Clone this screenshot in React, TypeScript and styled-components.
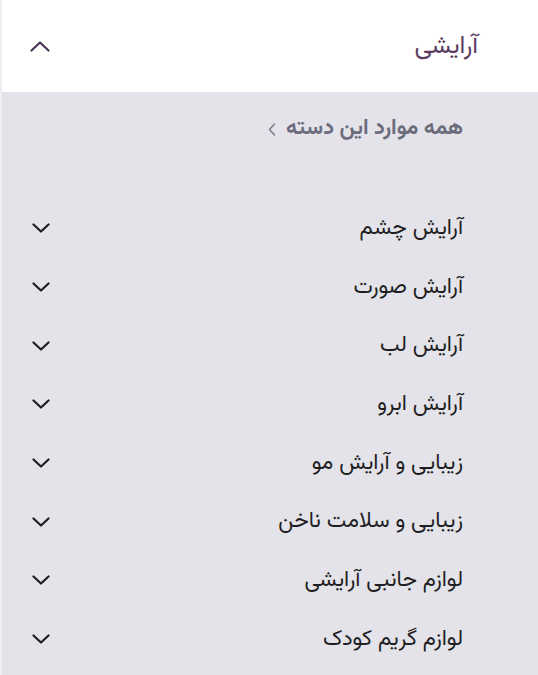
import React from "react";
import styled, { createGlobalStyle } from "styled-components";

const Global = createGlobalStyle`
  html, body { margin: 0; padding: 0; background: #e3e3e9; }
  body { font-family: "Vazirmatn", "Noto Sans Arabic", "DejaVu Sans", sans-serif; }
`;

const Panel = styled.div`
  width: 538px;
  min-height: 675px;
  box-sizing: border-box;
  border-left: 2px solid #efeff3;
  background: #e3e3e9;
  direction: rtl;
`;

const Header = styled.div`
  height: 92px;
  background: #ffffff;
  display: flex;
  align-items: center;
  justify-content: space-between;
  padding: 0 60px 0 28px;
  box-sizing: border-box;
`;

const HeaderTitle = styled.span`
  font-size: 25px;
  color: #5b3d60;
  line-height: 1;
`;

const Body = styled.div`
  padding: 8px 75px 0 30px;
  display: flex;
  flex-direction: column;
`;

const AllLink = styled.div`
  height: 58px;
  display: flex;
  align-items: center;
  gap: 10px;
  font-size: 21.7px;
  font-weight: bold;
  color: #6c6c7c;
`;

const List = styled.div`
  margin-top: 41px;
  display: flex;
  flex-direction: column;
`;

const Row = styled.div`
  height: 58.7px;
  display: flex;
  align-items: center;
  justify-content: space-between;
  font-size: 22px;
  color: #1e1e22;
`;

const Icon = styled.svg`
  display: block;
  flex: none;
`;

const ChevronDown = () => (
  <Icon width="18" height="10" viewBox="0 0 18 10">
    <polyline points="1.5,1.5 9,8.5 16.5,1.5" fill="none" stroke="#1e1e22" strokeWidth="2.2" strokeLinecap="round" strokeLinejoin="round" />
  </Icon>
);

const ChevronUp = () => (
  <Icon width="20" height="11" viewBox="0 0 20 11">
    <polyline points="1.5,9.5 10,1.5 18.5,9.5" fill="none" stroke="#4a3350" strokeWidth="2.2" strokeLinecap="round" strokeLinejoin="round" />
  </Icon>
);

const ChevronLeft = () => (
  <Icon width="8" height="13" viewBox="0 0 8 13">
    <polyline points="6.5,1 1.5,6.5 6.5,12" fill="none" stroke="#7a7a88" strokeWidth="1.5" strokeLinecap="round" strokeLinejoin="round" />
  </Icon>
);

const items = [
  "آرایش چشم",
  "آرایش صورت",
  "آرایش لب",
  "آرایش ابرو",
  "زیبایی و آرایش مو",
  "زیبایی و سلامت ناخن",
  "لوازم جانبی آرایشی",
  "لوازم گریم کودک",
];

export default function App() {
  return (
    <>
      <Global />
      <Panel>
        <Header>
          <HeaderTitle>آرایشی</HeaderTitle>
          <ChevronUp />
        </Header>
        <Body>
          <AllLink>
            <span>همه موارد این دسته</span>
            <ChevronLeft />
          </AllLink>
          <List>
            {items.map((t) => (
              <Row key={t}>
                <span>{t}</span>
                <ChevronDown />
              </Row>
            ))}
          </List>
        </Body>
      </Panel>
    </>
  );
}
